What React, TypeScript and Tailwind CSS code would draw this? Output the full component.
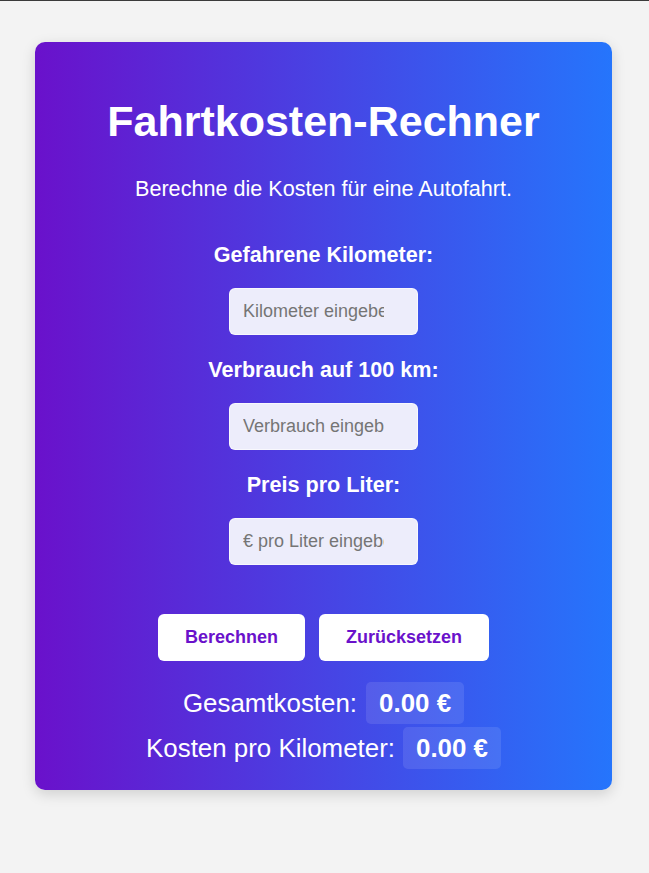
import { useState } from "react";

export default function App() {
  const [km, setKm] = useState("");
  const [verbrauch, setVerbrauch] = useState("");
  const [preis, setPreis] = useState("");
  const [total, setTotal] = useState(0);
  const [perKm, setPerKm] = useState(0);

  const berechnen = () => {
    const k = parseFloat(km) || 0;
    const v = parseFloat(verbrauch) || 0;
    const p = parseFloat(preis) || 0;
    const t = (k * v / 100) * p;
    setTotal(t);
    setPerKm(k > 0 ? t / k : 0);
  };

  const reset = () => {
    setKm("");
    setVerbrauch("");
    setPreis("");
    setTotal(0);
    setPerKm(0);
  };

  return (
    <div className="min-h-[873px] bg-[#f3f3f3] border-t border-[#3a3a3a] pt-[41px] font-['Liberation_Sans',Arial,sans-serif]">
      <div className="ml-[35px] w-[577px] rounded-[10px] bg-[linear-gradient(to_right,#6a11cb,#2575fc)] shadow-[0_4px_14px_rgba(0,0,0,0.15)] pt-[54px] pb-[21px] flex flex-col items-center text-white">
        <h1 className="text-[43px] font-bold leading-[50px]">Fahrtkosten-Rechner</h1>
        <p className="mt-[30px] text-[21.6px] leading-[25px]">Berechne die Kosten für eine Autofahrt.</p>

        <Field label="Gefahrene Kilometer:" placeholder="Kilometer eingeben" value={km} onChange={setKm} className="mt-[41px]" />
        <Field label="Verbrauch auf 100 km:" placeholder="Verbrauch eingeben" value={verbrauch} onChange={setVerbrauch} className="mt-[22px]" />
        <Field label="Preis pro Liter:" placeholder="€ pro Liter eingeben" value={preis} onChange={setPreis} className="mt-[22px]" />

        <div className="mt-[49px] flex gap-[14px]">
          <button onClick={berechnen} className="h-[47px] w-[147px] rounded-[6px] bg-white text-[18px] font-bold text-[#6a11cb]">
            Berechnen
          </button>
          <button onClick={reset} className="h-[47px] w-[170px] rounded-[6px] bg-white text-[18px] font-bold text-[#6a11cb]">
            Zurücksetzen
          </button>
        </div>

        <div className="mt-[21px] flex items-center text-[25.9px] leading-[30px]">
          <span>Gesamtkosten:</span>
          <span className="ml-[9px] rounded-[5px] bg-white/10 px-[13px] py-[6px] font-bold">{total.toFixed(2)} €</span>
        </div>
        <div className="mt-[3px] flex items-center text-[25.9px] leading-[30px]">
          <span>Kosten pro Kilometer:</span>
          <span className="ml-[8px] rounded-[5px] bg-white/10 px-[13px] py-[6px] font-bold">{perKm.toFixed(2)} €</span>
        </div>
      </div>
    </div>
  );
}

function Field({
  label,
  placeholder,
  value,
  onChange,
  className,
}: {
  label: string;
  placeholder: string;
  value: string;
  onChange: (v: string) => void;
  className?: string;
}) {
  return (
    <div className={"flex flex-col items-center " + (className ?? "")}>
      <label className="text-[21.6px] font-bold leading-[25px]">{label}</label>
      <input
        type="text"
        value={value}
        onChange={(e) => onChange(e.target.value)}
        placeholder={placeholder}
        className="mt-[21px] h-[47px] w-[189px] rounded-[6px] border border-white/60 bg-[#ededfb] pl-[13px] pr-[33px] text-[18px] text-[#333] placeholder:text-[#757575] outline-none"
      />
    </div>
  );
}
